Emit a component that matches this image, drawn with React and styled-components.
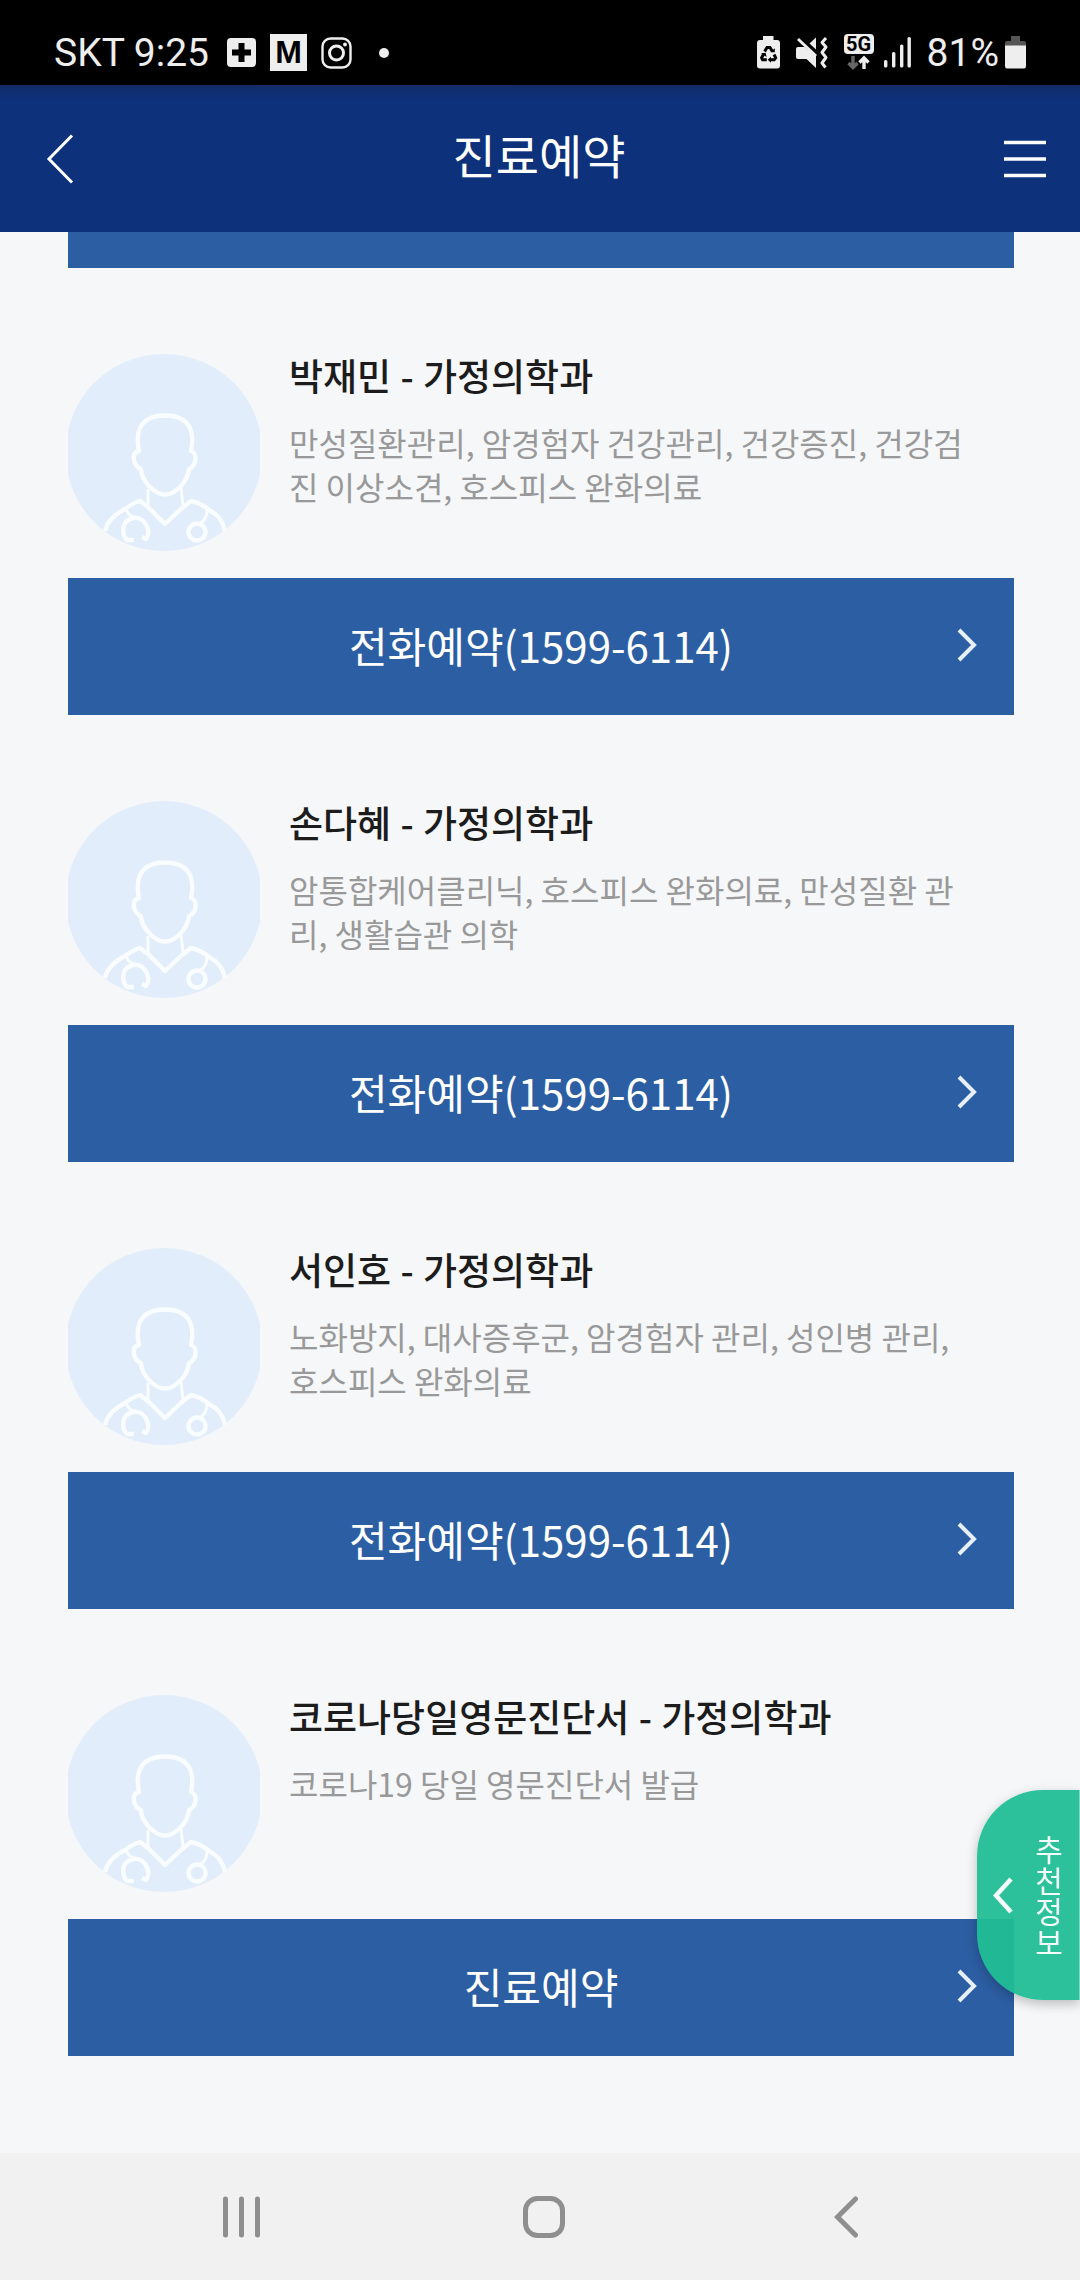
import React from "react";
import styled, { createGlobalStyle } from "styled-components";

const doctors = [
  {
    name: "박재민",
    dept: "가정의학과",
    fields: "만성질환관리, 암경험자 건강관리, 건강증진, 건강검진 이상소견, 호스피스 완화의료",
    action: "전화예약(1599-6114)",
    href: "tel:1599-6114",
  },
  {
    name: "손다혜",
    dept: "가정의학과",
    fields: "암통합케어클리닉, 호스피스 완화의료, 만성질환 관리, 생활습관 의학",
    action: "전화예약(1599-6114)",
    href: "tel:1599-6114",
  },
  {
    name: "서인호",
    dept: "가정의학과",
    fields: "노화방지, 대사증후군, 암경험자 관리, 성인병 관리, 호스피스 완화의료",
    action: "전화예약(1599-6114)",
    href: "tel:1599-6114",
  },
  {
    name: "코로나당일영문진단서",
    dept: "가정의학과",
    fields: "코로나19 당일 영문진단서 발급",
    action: "진료예약",
    href: "#reserve",
  },
];

const StatusIconsLeft = () => (
  <StatusGroup>
    <svg width="29" height="29" viewBox="0 0 29 29">
      <rect width="29" height="29" rx="4" fill="#eee" />
      <path d="M11.500 5h6v6.500H24v6h-6.500V24h-6v-6.500H5v-6h6.500z" fill="#000" />
    </svg>
    <MailBadge>M</MailBadge>
    <svg width="32" height="32" viewBox="0 0 32 32" fill="none" stroke="#eee">
      <rect x="1.500" y="1.500" width="28" height="29" rx="8" strokeWidth="2.400" />
      <circle cx="15.500" cy="16" r="7" strokeWidth="3" />
      <circle cx="24" cy="7.500" r="1.900" fill="#eee" stroke="none" />
    </svg>
    <Dot />
  </StatusGroup>
);

const SaverIcon = () => (
  <svg width="23" height="33" viewBox="0 0 23 33">
    <path d="M6 0h10.500v4H20q3 0 3 3v22.500q0 3-3 3H3q-3 0-3-3V7q0-3 3-3h3z" fill="#eee" />
    <g fill="none" stroke="#000" strokeWidth="3">
      <path d="M7.600 15.500l2.400-4h3l2.400 4" />
      <path d="M17 18.500l1.700 3.300-1.500 2h-4" />
      <path d="M9.800 23.800H5.600l-1-2 2-3.800" />
    </g>
    <path d="M13.500 16.200h4.300v-4z M14 20.700v6l-3.300-3z M4 17.300l4.600-.6 1 4.300z" fill="#000" />
  </svg>
);

const MuteIcon = () => (
  <svg width="32" height="33" viewBox="0 0 32 33">
    <path d="M0 13q0-2 2-2h6.500L20 20v12l-9.500-9H2q-2 0-2-2z" fill="#eee" />
    <path d="M13.500 7.500L20 1.500v12z" fill="#eee" />
    <path d="M2 3l18 17" stroke="#eee" strokeWidth="3" />
    <path
      d="M30 2l-4 4.500 4 4.500-4 5.500 4 5-4 5.500 3.500 4.500"
      fill="none"
      stroke="#eee"
      strokeWidth="3"
      strokeLinejoin="round"
    />
  </svg>
);

const NetworkIcon = () => (
  <Network>
    <NetworkLabel>5G</NetworkLabel>
    <svg width="30" height="16" viewBox="0 0 30 16" fill="none" strokeWidth="3.400">
      <path d="M9 1v10M4.500 8L9 12.500 13.500 8" stroke="#666" />
      <path d="M20 14V4M15.500 7.500L20 3l4.500 4.500" stroke="#eee" />
    </svg>
  </Network>
);

const SignalIcon = () => (
  <svg width="27" height="31" viewBox="0 0 27 31" fill="#eee">
    <rect x="0" y="23" width="3.400" height="7.500" rx="1.500" />
    <rect x="8" y="15" width="3.400" height="15.500" rx="1.500" />
    <rect x="16" y="7.500" width="3.400" height="23" rx="1.500" />
    <rect x="23.500" y="0" width="3.400" height="30.500" rx="1.500" />
  </svg>
);

const BatteryIcon = () => (
  <svg width="21" height="33" viewBox="0 0 21 33">
    <path d="M6 0h9v5h4q2 0 2 2v3H0V7q0-2 2-2h4z" fill="#555" />
    <path d="M0 9.500h21V30q0 2.500-2 2.500H2q-2 0-2-2.500z" fill="#eee" />
  </svg>
);

const DoctorIcon = () => (
  <Avatar viewBox="0 0 192 197">
    <circle cx="96" cy="98.500" r="98.500" fill="#e1edfa" />
    <g fill="none" stroke="#fafdff" strokeWidth="4.400" strokeLinejoin="round">
      <path d="M97 61.500C84 61.500 76 66 72 74c-3 7-3 14-1 23-4 1-6 4-5 9s4 8 7 9c0 8 4 13 9 18 5 5 10 7.500 15 7.500s10-2.500 15-7.500c5-5 8-10 9-18 3-1 6-5 6.500-9s-1-8-4.500-9c2-9 2-16-1-23-4-8-12-12.500-25-12.500z" />
      <path d="M80 135v18M113 134l2 17" strokeWidth="3" />
      <path d="M37 177c2-9 10-17 20-22q8-6 15-8l9 7 16 16 17-16 9-7q10 2 18 9c8 4 14 10 16 21" />
      <path d="M58 154c1 5 4 8 8 9" strokeWidth="3" />
      <path d="M66 186h-7c-5-5-5-15 0-19 6-5 14-4 18 2 4 6 4 12 1 16l-4-2" />
      <path d="M139 156c0 6-2 10-6 13" strokeWidth="3" />
      <circle cx="129" cy="178" r="8.500" />
    </g>
  </Avatar>
);

const DoctorItem = ({ doctor }) => (
  <Item>
    <Profile>
      <DoctorIcon />
      <Info>
        <Name>
          {doctor.name} <Dash>-</Dash> {doctor.dept}
        </Name>
        <Fields>{doctor.fields}</Fields>
      </Info>
    </Profile>
    <BookLink href={doctor.href}>
      {doctor.action}
      <BookArrow width="20" height="34" viewBox="0 0 20 34">
        <path d="M2 2l15 15L2 32" />
      </BookArrow>
    </BookLink>
  </Item>
);

const App = () => {
  return (
    <>
      <GlobalStyle />
      <Screen>
        <StatusBar>
          <CarrierGroup>
            <StatusText>SKT 9:25</StatusText>
            <StatusIconsLeft />
          </CarrierGroup>
          <SignalGroup>
            <SaverIcon />
            <MuteIcon />
            <CellGroup>
              <NetworkIcon />
              <SignalIcon />
            </CellGroup>
            <BatteryGroup>
              <StatusText>81%</StatusText>
              <BatteryIcon />
            </BatteryGroup>
          </SignalGroup>
        </StatusBar>

        <Header>
          <IconButton aria-label="이전">
            <svg width="28" height="50" viewBox="0 0 28 50">
              <path d="M26 1.500L3 25l23 23.500" fill="none" stroke="#fff" strokeWidth="3" />
            </svg>
          </IconButton>
          <Title>진료예약</Title>
          <IconButton aria-label="메뉴">
            <svg width="42" height="38" viewBox="0 0 42 38">
              <path d="M0 2.500h42M0 19h42M0 35.500h42" stroke="#fff" strokeWidth="3.600" />
            </svg>
          </IconButton>
        </Header>

        <Content>
          <PassedBar />
          {doctors.map((doctor) => (
            <DoctorItem key={doctor.name} doctor={doctor} />
          ))}
        </Content>

        <SideTab aria-label="추천정보">
          <svg width="20" height="37" viewBox="0 0 20 37">
            <path d="M18 2L3 18.500 18 35" fill="none" stroke="#f4fffc" strokeWidth="4.600" />
          </svg>
          <SideLabel>추천정보</SideLabel>
        </SideTab>

        <NavBar>
          <NavButton aria-label="최근 앱">
            <svg width="38" height="42" viewBox="0 0 38 42">
              <path d="M2.500 3v36M18.500 3v36M34.500 3v36" />
            </svg>
          </NavButton>
          <NavButton aria-label="홈">
            <svg width="42" height="42" viewBox="0 0 42 42">
              <rect x="2.500" y="2.500" width="37" height="37" rx="12" />
            </svg>
          </NavButton>
          <NavButton aria-label="뒤로">
            <svg width="24" height="42" viewBox="0 0 24 42">
              <path d="M21.500 3L3.500 21l18 18" />
            </svg>
          </NavButton>
        </NavBar>
      </Screen>
    </>
  );
};

export default App;

const GlobalStyle = createGlobalStyle`
  * {
    box-sizing: border-box;
  }
  body {
    margin: 0;
    background: #f5f7f9;
    font-family: "Noto Sans CJK KR", "Noto Sans", sans-serif;
  }
  button {
    border: none;
    padding: 0;
    background: none;
    font-family: inherit;
    cursor: pointer;
  }
  svg {
    display: block;
    flex-shrink: 0;
  }
`;

const Screen = styled.div`
  min-height: 100vh;
  display: flex;
  flex-direction: column;
`;

const StatusBar = styled.div`
  height: 85px;
  padding: 20px 54px 0;
  background: #000;
  color: #eee;
  display: flex;
  justify-content: space-between;
  align-items: center;
`;

const StatusGroup = styled.div`
  display: flex;
  align-items: center;
  gap: 14px;
`;

const CarrierGroup = styled(StatusGroup)`
  gap: 18px;
`;

const SignalGroup = styled(StatusGroup)`
  gap: 16px;
`;

const CellGroup = styled(StatusGroup)`
  gap: 10px;
`;

const BatteryGroup = styled(StatusGroup)`
  gap: 6px;
`;

const StatusText = styled.span`
  font-family: Roboto, sans-serif;
  font-size: 39px;
  line-height: 46px;
`;

const MailBadge = styled.span`
  width: 37px;
  height: 37px;
  background: #eee;
  color: #000;
  font-family: "Liberation Sans", sans-serif;
  font-size: 32px;
  line-height: 37px;
  font-weight: 700;
  text-align: center;
`;

const Dot = styled.span`
  width: 10px;
  height: 10px;
  margin-left: 12px;
  border-radius: 50%;
  background: #eee;
`;

const Network = styled.div`
  display: flex;
  flex-direction: column;
  gap: 1px;
`;

const NetworkLabel = styled.span`
  height: 20px;
  border-radius: 4px;
  background: #eee;
  color: #000;
  font-family: Roboto, sans-serif;
  font-size: 20px;
  line-height: 21px;
  font-weight: 700;
  text-align: center;
`;

const Header = styled.header`
  height: 147px;
  padding: 0 34px 0 46px;
  background: linear-gradient(#122c66, #0d317a 14px);
  display: flex;
  justify-content: space-between;
  align-items: center;
`;

const IconButton = styled.button`
  height: 100px;
  display: flex;
  align-items: center;
`;

const Title = styled.h1`
  margin: 0;
  padding-bottom: 10px;
  color: #fff;
  font-size: 47px;
  line-height: 70px;
  font-weight: 400;
`;

const Content = styled.main`
  flex: 1;
  padding: 0 66px 96px 68px;
`;

const PassedBar = styled.div`
  height: 36px;
  background: #2c5ea3;
`;

const Item = styled.section`
  padding-top: 86px;
`;

const Profile = styled.div`
  display: flex;
  gap: 29px;
  padding-right: 44px;
`;

const Avatar = styled.svg`
  width: 192px;
  height: 197px;
`;

const Info = styled.div`
  flex: 1;
`;

const Name = styled.h2`
  margin: 0 0 24px;
  color: #1c1c1c;
  font-size: 37px;
  line-height: 42px;
  font-weight: 500;
`;

const Dash = styled.span`
  margin: 0 1px;
`;

const Fields = styled.p`
  margin: 0;
  color: #999;
  font-size: 32px;
  line-height: 44px;
`;

const BookLink = styled.a`
  position: relative;
  height: 137px;
  margin-top: 27px;
  padding-bottom: 4px;
  background: #2c5ea3;
  color: #fff;
  font-size: 42px;
  text-decoration: none;
  display: flex;
  justify-content: center;
  align-items: center;
`;

const BookArrow = styled.svg`
  position: absolute;
  right: 37px;
  fill: none;
  stroke: #e6effa;
  stroke-width: 4px;
`;

const SideTab = styled.button`
  position: fixed;
  right: 0;
  bottom: 280px;
  width: 103px;
  height: 210px;
  padding: 0 15px 0 16px;
  border-right: 1px solid #7fd9c1;
  border-radius: 66px 0 0 66px;
  background: rgba(33, 190, 149, 0.95);
  box-shadow: 0 4px 12px rgba(0, 0, 0, 0.24);
  display: flex;
  justify-content: space-between;
  align-items: center;
`;

const SideLabel = styled.span`
  width: 30px;
  color: #f4fffc;
  font-size: 30px;
  line-height: 31px;
  word-break: break-all;
`;

const NavBar = styled.nav`
  height: 127px;
  padding: 0 83px 0 91px;
  background: #f1f1f1;
  display: flex;
`;

const NavButton = styled.button`
  flex: 1;
  display: flex;
  justify-content: center;
  align-items: center;

  svg {
    fill: none;
    stroke: #8f8f8f;
    stroke-width: 5px;
    stroke-linecap: round;
  }
`;
